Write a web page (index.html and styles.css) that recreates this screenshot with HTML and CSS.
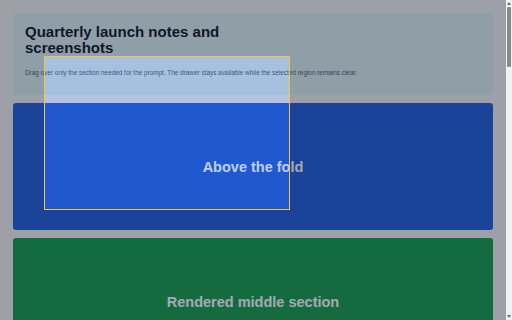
FILE: index.html
```html
<!DOCTYPE html>
<html lang="en">
<head>
<meta charset="utf-8">
<title>Quarterly launch notes and screenshots</title>
<link rel="stylesheet" href="styles.css">
</head>
<body>
<main class="page">
  <header class="intro">
    <h1 class="intro-title">Quarterly launch notes and screenshots</h1>
    <p class="intro-text">Drag over only the section needed for the prompt. The drawer stays available while the selected region remains clear.</p>
  </header>
  <section class="shot shot-blue">Above the fold</section>
  <section class="shot shot-green">Rendered middle section</section>
  <section class="shot shot-slate">Below the fold</section>
</main>
<div class="selection" aria-label="Selected region"></div>
<div class="scrollbar" aria-hidden="true">
  <span class="scroll-arrow scroll-up"></span>
  <span class="scroll-thumb"></span>
  <span class="scroll-arrow scroll-down"></span>
</div>
</body>
</html>
```
FILE: styles.css
```css
html, body {
  margin: 0;
}
body {
  padding: 13px 19px 13px 13px;
  background: #dbdcde;
  font-family: "Liberation Sans", Arial, sans-serif;
  position: relative;
}
.page {
  display: flex;
  flex-direction: column;
  gap: 8px;
}
.intro {
  background: #c7d8de;
  border-radius: 4px;
  padding: 11px 12px 18px;
}
.intro-title {
  margin: 0;
  max-width: 240px;
  font-size: 15px;
  line-height: 16px;
  font-weight: 700;
  color: #0f172a;
}
.intro-text {
  margin: 12px 0 0;
  font-size: 6.4px;
  line-height: 9px;
  color: #475569;
}
.shot {
  height: 127px;
  border-radius: 3px;
  display: flex;
  align-items: center;
  justify-content: center;
  font-size: 14.5px;
  font-weight: 700;
  color: #e5e7eb;
}
.shot-blue {
  background: #2056ca;
}
.shot-green {
  background: #18904a;
}
.shot-slate {
  background: #7c3aed;
}
.selection {
  position: absolute;
  left: 44px;
  top: 56px;
  width: 246px;
  height: 154px;
  box-sizing: border-box;
  border: 1px solid #f5c542;
  background: rgba(37, 99, 235, 0.2);
  box-shadow: 0 0 0 3000px rgba(15, 23, 42, 0.3);
}
.scrollbar {
  position: fixed;
  top: 0;
  right: 0;
  bottom: 0;
  width: 6px;
  background: #f1f1f1;
  display: flex;
  flex-direction: column;
  align-items: center;
}
.scroll-arrow {
  width: 0;
  height: 0;
  border-left: 2px solid transparent;
  border-right: 2px solid transparent;
}
.scroll-up {
  margin-top: 2px;
  border-bottom: 3px solid #6b6b6b;
}
.scroll-down {
  margin-top: auto;
  margin-bottom: 2px;
  border-top: 3px solid #6b6b6b;
}
.scroll-thumb {
  margin-top: 2px;
  width: 4px;
  height: 60px;
  background: #8a8a8a;
  border-radius: 1px;
}
```
